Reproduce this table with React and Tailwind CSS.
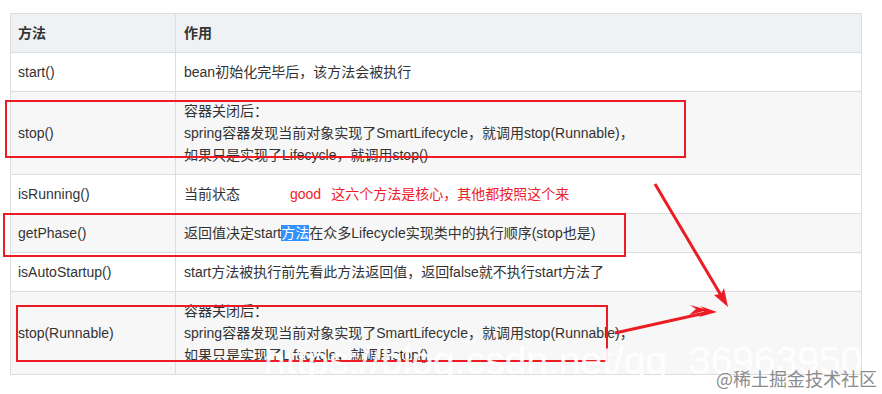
import React from "react";

const rows = [
  { name: "start()", lines: ["bean初始化完毕后，该方法会被执行"] },
  {
    name: "stop()",
    lines: [
      "容器关闭后：",
      "spring容器发现当前对象实现了SmartLifecycle，就调用stop(Runnable)，",
      "如果只是实现了Lifecycle，就调用stop()"
    ]
  },
  { name: "isRunning()", running: true },
  { name: "getPhase()", phase: true },
  {
    name: "isAutoStartup()",
    lines: ["start方法被执行前先看此方法返回值，返回false就不执行start方法了"]
  },
  {
    name: "stop(Runnable)",
    lines: [
      "容器关闭后：",
      "spring容器发现当前对象实现了SmartLifecycle，就调用stop(Runnable)，",
      "如果只是实现了Lifecycle，就调用stop()"
    ]
  }
];

export default function App() {
  return (
    <div
      className="relative w-[882px] h-[394px] bg-white overflow-hidden text-[#333333]"
      style={{ fontFamily: '"Liberation Sans", "Noto Sans CJK SC", sans-serif' }}>
      {/* Table */}
      <div className="pt-[13px] pl-[10px]">
        <table className="w-[852px] border-collapse text-[14px] leading-[22px]">
          <thead>
            <tr className="bg-[#eff2f5]">
              <th className="w-[165px] border border-[#dddddd] pl-[7px] pr-2 py-2 text-left font-bold">
                方法
              </th>
              <th className="border border-[#dddddd] pl-2 pr-2 py-2 text-left font-bold">
                作用
              </th>
            </tr>
          </thead>
          <tbody>
            {rows.map((r, i) => (
              <tr key={r.name} className={i % 2 ? "bg-[#f7f7f7]" : "bg-white"}>
                <td className="border border-[#dddddd] pl-[7px] pr-2 py-2">{r.name}</td>
                <td className="border border-[#dddddd] pl-2 pr-2 py-2">
                  {r.running && (
                    <div>
                      当前状态
                      <span className="ml-[50px] text-[#ee1d2a]">
                        good<span className="ml-[10px]">这六个方法是核心，其他都按照这个来</span>
                      </span>
                    </div>
                  )}
                  {r.phase && (
                    <div>
                      返回值决定start
                      <span className="bg-[#3390ff] text-white">方法</span>
                      在众多Lifecycle实现类中的执行顺序(stop也是)
                    </div>
                  )}
                  {r.lines &&
                    r.lines.map((l) => <div key={l}>{l}</div>)}
                </td>
              </tr>
            ))}
          </tbody>
        </table>
      </div>

      {/* Annotations */}
      <svg className="absolute inset-0 w-[882px] h-[394px] pointer-events-none" viewBox="0 0 882 394">
        <g fill="none" stroke="#ec1c24" strokeWidth="2">
          <rect x="6" y="101" width="679" height="56" />
          <rect x="4" y="214" width="621" height="42" />
          <rect x="17" y="306" width="590" height="55" />
          <line x1="655" y1="184" x2="722" y2="297" strokeWidth="3" />
          <line x1="615" y1="333" x2="705" y2="313" strokeWidth="3" />
        </g>
        <g fill="#ec1c24">
          <polygon points="728,307 714,295 721,294 724,288" />
          <polygon points="717,312 700,306 705,310 699,317" />
          <polygon points="708,310 690,305 696,309 689,315" />
        </g>
      </svg>

      {/* Watermarks */}
      <div className="absolute left-[264px] top-[341px] text-[39px] leading-none text-white/90 whitespace-nowrap">
        https://blog.csdn.net/qq_36963950
      </div>
      <div
        className="absolute left-[716px] top-[366px] text-[18px] leading-[24px] text-[#8c8c8c] whitespace-nowrap"
        style={{ fontFamily: '"Noto Sans CJK SC", sans-serif' }}>
        @稀土掘金技术社区
      </div>
    </div>
  );
}
